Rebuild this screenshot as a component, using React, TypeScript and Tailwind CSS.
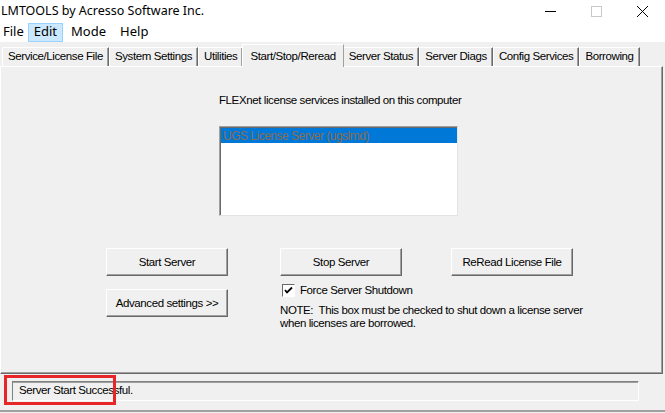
import React from "react";

const dlg = { fontFamily: '"Liberation Sans", Arial, sans-serif' };
const ui = { fontFamily: '"Noto Sans", "Open Sans", sans-serif' };

const tabs = [
  "Service/License File",
  "System Settings",
  "Utilities",
  "Start/Stop/Reread",
  "Server Status",
  "Server Diags",
  "Config Services",
  "Borrowing",
];

const Btn = ({ children, className = "" }: { children: React.ReactNode; className?: string }) => (
  <div
    className={
      "flex h-[28px] w-[122px] shrink-0 items-center justify-center whitespace-nowrap border border-t-white border-l-white border-r-[#696969] border-b-[#696969] bg-[#f0f0f0] text-black shadow-[inset_-1px_-1px_0_#a0a0a0] " +
      className
    }
  >
    {children}
  </div>
);

export default function App() {
  return (
    <div
      className="flex h-[413px] w-[665px] flex-col overflow-hidden bg-[#f0f0f0] text-[11.5px] tracking-[-0.4px] text-black"
      style={dlg}
    >
      {/* title bar */}
      <div className="flex h-[22px] items-center bg-white tracking-normal" style={ui}>
        <span className="flex-1 whitespace-nowrap pl-[1px] text-[12.5px] leading-none">LMTOOLS by Acresso Software Inc.</span>
        <div className="flex items-center">
          <span className="flex w-[46px] justify-center">
            <svg width="11" height="11" viewBox="0 0 11 11"><path d="M0 5.5h11" stroke="#000" /></svg>
          </span>
          <span className="flex w-[46px] justify-center">
            <svg width="11" height="11" viewBox="0 0 11 11"><rect x="0.5" y="0.5" width="10" height="10" fill="none" stroke="#c8c8c8" /></svg>
          </span>
          <span className="flex w-[46px] justify-center">
            <svg width="11" height="11" viewBox="0 0 11 11"><path d="M0 0L11 11M11 0L0 11" stroke="#000" /></svg>
          </span>
        </div>
      </div>

      {/* menu bar */}
      <div className="flex h-[20px] items-center bg-white text-[13px] tracking-normal" style={ui}>
        <span className="pl-[3px] pr-[4px]">File</span>
        <span className="flex h-[19px] items-center border border-[#99d1ff] bg-[#cce8ff] px-[5px]">Edit</span>
        <span className="ml-[8px]">Mode</span>
        <span className="ml-[14px]">Help</span>
      </div>

      {/* tabs */}
      <div className="flex items-end whitespace-nowrap pt-[2px] pl-[2px]">
        {tabs.map((t) =>
          t === "Start/Stop/Reread" ? (
            <div
              key={t}
              className="relative z-10 -mx-[1px] mb-[-1px] flex h-[23px] shrink-0 items-start border border-b-0 border-t-white border-l-white border-r-[#a0a0a0] bg-[#f0f0f0] px-[7px] pt-[3px]"
            >
              {t}
            </div>
          ) : (
            <div
              key={t}
              className="flex h-[19px] shrink-0 items-center border border-b-0 border-t-white border-l-white border-r-[#696969] bg-[#f0f0f0] px-[5px] shadow-[inset_-1px_0_0_#a0a0a0]"
            >
              {t}
            </div>
          )
        )}
      </div>

      {/* panel */}
      <div className="mr-[2px] flex h-[308px] flex-col border border-t-white border-l-white border-r-[#696969] border-b-[#696969] shadow-[inset_-1px_-1px_0_#a0a0a0]">
        <div className="ml-[218px] mt-[25px] whitespace-nowrap">FLEXnet license services installed on this computer</div>
        <div className="ml-[218px] mt-[17px] h-[90px] w-[239px] border border-t-[#a0a0a0] border-l-[#a0a0a0] border-r-[#e3e3e3] border-b-[#e3e3e3] bg-white shadow-[inset_1px_1px_0_#696969]">
          <div className="ml-[1px] mt-[1px] flex h-[15px] items-center whitespace-nowrap bg-[#0078d7] pl-[2px] text-[12px] tracking-[-0.5px] text-[#8a6d55]">
            UGS License Server (ugslmd)
          </div>
        </div>

        <div className="mt-[32px] flex">
          <div className="ml-[105px] flex w-[122px] shrink-0 flex-col gap-[13px]">
            <Btn>Start Server</Btn>
            <Btn>Advanced settings &gt;&gt;</Btn>
          </div>
          <div className="ml-[52px] flex w-[320px] shrink-0 flex-col whitespace-nowrap">
            <Btn>Stop Server</Btn>
            <div className="mt-[6px] flex items-center gap-[5px] pl-[2px]">
              <div className="flex h-[13px] w-[13px] items-center justify-center border border-t-[#696969] border-l-[#696969] border-r-white border-b-white bg-white">
                <svg width="9" height="9" viewBox="0 0 9 9">
                  <path d="M1 4l2 2.5L8 1.5" fill="none" stroke="#000" strokeWidth="1.8" />
                </svg>
              </div>
              <span>Force Server Shutdown</span>
            </div>
            <div className="mt-[4px] leading-[13px]">
              NOTE:&nbsp; This box must be checked to shut down a license server
              <br />
              when licenses are borrowed.
            </div>
          </div>
          <div className="-ml-[149px] shrink-0">
            <Btn>ReRead License File</Btn>
          </div>
        </div>
      </div>

      {/* status */}
      <div className="relative mt-[7px] ml-[12px] flex h-[20px] w-[627px] items-center border border-t-[#808080] border-l-[#808080] border-r-white border-b-white pl-[6px] shadow-[inset_0_1px_0_#a0a0a0]">
        Server Start Successful.
        <div className="pointer-events-none absolute -left-[9px] -top-[7px] h-[30px] w-[112px] border-[3px] border-[#e8262a]" />
      </div>
      <div className="mt-[9px] h-[2px] w-full bg-[#a0a0a0]" />
    </div>
  );
}
